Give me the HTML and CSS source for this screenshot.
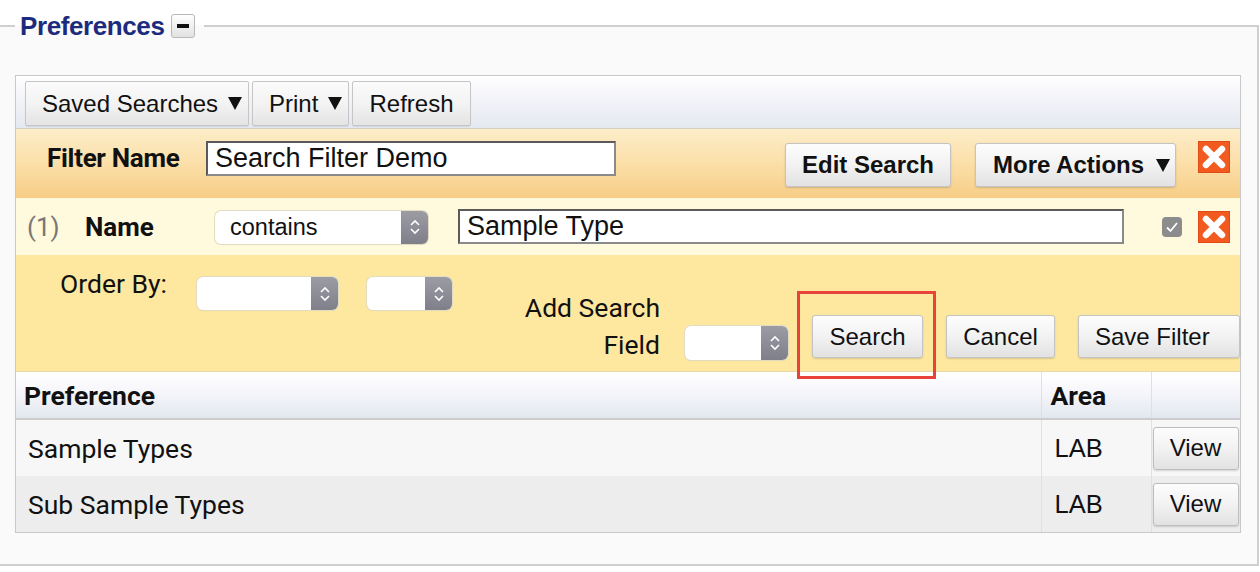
FILE: index.html
```html
<!DOCTYPE html>
<html>
<head>
<meta charset="utf-8">
<link rel="stylesheet" href="styles.css">
</head>
<body>
<fieldset class="prefs">
  <legend class="prefs-legend"><span class="legend-text">Preferences</span><span class="collapse-btn"><span class="dash"></span></span></legend>
  <div class="panel">
    <div class="toolbar">
      <button class="tbtn">Saved Searches <svg class="caret" viewBox="0 0 14 14" width="14" height="14"><path d="M0 1 H14 L7 14 Z" fill="#111"/></svg></button>
      <button class="tbtn">Print <svg class="caret" viewBox="0 0 14 14" width="14" height="14"><path d="M0 1 H14 L7 14 Z" fill="#111"/></svg></button>
      <button class="tbtn">Refresh</button>
    </div>
    <div class="filter-head">
      <span class="filter-label">Filter Name</span>
      <div class="text-input name-input">Search Filter Demo</div>
      <button class="btn bold edit-btn">Edit Search</button>
      <button class="btn bold more-btn">More Actions <svg class="caret" viewBox="0 0 14 14" width="14" height="14"><path d="M0 1 H14 L7 14 Z" fill="#111"/></svg></button>
      <svg class="xicon head-x" viewBox="0 0 32 32" width="32" height="32"><rect x="0.5" y="0.5" width="31" height="31" fill="#f35a20" stroke="#e04a14"/><path d="M8 8 L24 24 M24 8 L8 24" stroke="#fff" stroke-width="6.5" stroke-linecap="round"/></svg>
    </div>
    <div class="crit-row">
      <span class="crit-num">(1)</span>
      <span class="crit-label">Name</span>
      <div class="select sel-contains"><span class="sel-text">contains</span><span class="sel-arrows"><svg viewBox="0 0 12 20" width="12" height="20"><path d="M2 8 L6 4 L10 8 M2 12 L6 16 L10 12" fill="none" stroke="#fff" stroke-width="1.6"/></svg></span></div>
      <div class="text-input crit-input">Sample Type</div>
      <span class="checkbox"><svg viewBox="0 0 20 20" width="20" height="20"><rect x="0" y="0" width="20" height="20" rx="4" fill="#8c8c8c"/><path d="M5 10.5 L8.5 14 L15 6" fill="none" stroke="#fff" stroke-width="1.8"/></svg></span>
      <svg class="xicon crit-x" viewBox="0 0 32 32" width="32" height="34"><rect x="0.5" y="0.5" width="31" height="31" fill="#f35a20" stroke="#e04a14"/><path d="M8 8 L24 24 M24 8 L8 24" stroke="#fff" stroke-width="6.5" stroke-linecap="round"/></svg>
    </div>
    <div class="order-area">
      <span class="order-label">Order By:</span>
      <div class="select sel-order1"><span class="sel-text"></span><span class="sel-arrows"><svg viewBox="0 0 12 20" width="12" height="20"><path d="M2 8 L6 4 L10 8 M2 12 L6 16 L10 12" fill="none" stroke="#fff" stroke-width="1.6"/></svg></span></div>
      <div class="select sel-order2"><span class="sel-text"></span><span class="sel-arrows"><svg viewBox="0 0 12 20" width="12" height="20"><path d="M2 8 L6 4 L10 8 M2 12 L6 16 L10 12" fill="none" stroke="#fff" stroke-width="1.6"/></svg></span></div>
      <span class="add-label">Add Search<br>Field</span>
      <div class="select sel-add"><span class="sel-text"></span><span class="sel-arrows"><svg viewBox="0 0 12 20" width="12" height="20"><path d="M2 8 L6 4 L10 8 M2 12 L6 16 L10 12" fill="none" stroke="#fff" stroke-width="1.6"/></svg></span></div>
      <span class="highlight"><button class="btn act-btn search-btn">Search</button></span>
      <button class="btn act-btn cancel-btn">Cancel</button>
      <button class="btn act-btn save-btn">Save Filter</button>
    </div>
    <table class="results">
      <colgroup><col class="w-pref"><col class="w-area"><col class="w-act"></colgroup>
      <thead>
        <tr><th class="c-pref">Preference</th><th class="c-area">Area</th><th class="c-act"></th></tr>
      </thead>
      <tbody>
        <tr class="odd"><td class="c-pref">Sample Types</td><td class="c-area lab">LAB</td><td class="c-act"><button class="btn view-btn">View</button></td></tr>
        <tr class="even"><td class="c-pref">Sub Sample Types</td><td class="c-area lab">LAB</td><td class="c-act"><button class="btn view-btn">View</button></td></tr>
      </tbody>
    </table>
  </div>
</fieldset>
</body>
</html>
```

FILE: styles.css
```css
html, body {
  margin: 0;
  padding: 0;
  background: #ffffff;
}
body {
  font-family: "Liberation Sans", Arial, sans-serif;
  color: #111;
  overflow: hidden;
  padding-top: 11px;
}
.prefs {
  margin: 0 2px 0 -1px;
  padding: 34px 16px 31px 15px;
  border: 1px solid #cfcfcf;
  border-width: 2px 2px 2px 1px;
  background: #fafafa;
}
.prefs-legend {
  padding: 0 9px 0 5px;
  height: 30px;
  display: flex;
  align-items: center;
  margin-left: 0;
}
.legend-text {
  font-family: "Liberation Sans", Arial, sans-serif;
  font-weight: bold;
  font-size: 26px;
  letter-spacing: -0.4px;
  color: #1c2b7d;
  line-height: 30px;
}
.collapse-btn {
  width: 22px;
  height: 22px;
  margin-left: 7px;
  border: 1px solid #b9b9b9;
  border-radius: 3px;
  background: linear-gradient(#ffffff, #e2e2e2);
  display: flex;
  align-items: center;
  justify-content: center;
}
.dash {
  width: 12px;
  height: 4px;
  background: #111;
}
.panel {
  border: 1px solid #c9c9c9;
  background: #ffffff;
}
.toolbar {
  display: flex;
  gap: 3px;
  padding: 5px 9px 2px 9px;
  height: 45px;
  background: linear-gradient(#ffffff 0%, #f6f6fb 35%, #e4e8f0 100%);
  border-bottom: 1px solid #d6d0c0;
}
button {
  font-family: "Liberation Sans", Arial, sans-serif;
  color: #111;
  cursor: default;
}
.tbtn {
  height: 45px;
  padding: 0 16px;
  font-size: 24px;
  border: 1px solid #c6c6c6;
  border-radius: 2px;
  background: linear-gradient(#fbfbfb 0%, #f3f3f3 50%, #e4e4e4 100%);
  box-shadow: 0 1px 1px rgba(0,0,0,0.08);
  white-space: nowrap;
}
.tbtn:first-child { padding: 0 0 0 16px; width: 224px; text-align: left; }
.tbtn:nth-child(2) { width: 97px; padding: 0 0 0 16px; text-align: left; }
.tbtn:nth-child(3) { width: 119px; padding: 0; }
.caret {
  display: inline-block;
  vertical-align: middle;
  margin-left: 3px;
  position: relative;
  top: -2px;
}
.btn {
  font-size: 24px;
  border: 1px solid #c4c4c4;
  border-radius: 3px;
  background: linear-gradient(#fdfdfd 0%, #f2f2f2 50%, #e2e2e2 100%);
  box-shadow: 0 1px 2px rgba(0,0,0,0.15);
  padding: 0;
  white-space: nowrap;
}
.bold { font-weight: bold; font-size: 24px; }
.filter-head {
  display: flex;
  align-items: flex-start;
  height: 69px;
  padding-left: 31px;
  padding-right: 10px;
  background: linear-gradient(#fdedc9 0%, #fbdfa8 50%, #f7cd87 100%);
}
.filter-label {
  font-family: Roboto, "Liberation Sans", sans-serif;
  font-weight: bold;
  font-size: 26px;
  letter-spacing: -0.3px;
  margin-top: 14px;
  width: 159px;
}
.text-input {
  background: #fff;
  border: 2px solid #5a5a5a;
  border-right-color: #8a8a8a;
  border-bottom-color: #8a8a8a;
  font-family: "Liberation Sans", Arial, sans-serif;
  font-size: 27px;
  box-sizing: border-box;
  padding-left: 7px;
  display: flex;
  align-items: center;
  white-space: nowrap;
}
.name-input {
  width: 410px;
  height: 35px;
  margin-top: 12px;
}
.edit-btn {
  margin-left: auto;
  margin-top: 14px;
  width: 166px;
  height: 44px;
}
.more-btn {
  margin-left: 24px;
  margin-top: 14px;
  width: 201px;
  height: 44px;
  text-align: left;
  padding-left: 17px;
}
.more-btn .caret { margin-left: 5px; }
.xicon { display: block; }
.head-x {
  margin-left: 22px;
  margin-top: 12px;
}
.crit-row {
  display: flex;
  align-items: center;
  height: 57px;
  padding-left: 11px;
  padding-right: 10px;
  background: #fff9de;
}
.crit-num {
  font-family: Roboto, "Liberation Sans", sans-serif;
  font-size: 26px;
  color: #777;
  width: 58px;
}
.crit-label {
  font-family: Roboto, "Liberation Sans", sans-serif;
  font-weight: bold;
  font-size: 26px;
  width: 130px;
}
.select {
  display: flex;
  height: 33px;
  border-radius: 6px;
  background: #fff;
  box-shadow: 0 0 0 1px #e2dcc0, 0 1px 1px rgba(0,0,0,0.1);
  overflow: hidden;
  box-sizing: border-box;
}
.sel-text {
  flex: 1;
  font-family: "Liberation Sans", Arial, sans-serif;
  font-size: 23.5px;
  padding-left: 15px;
  display: flex;
  align-items: center;
}
.sel-arrows {
  width: 27px;
  background: linear-gradient(#9c9ca5, #7f7f8a);
  display: flex;
  align-items: center;
  justify-content: center;
}
.sel-contains {
  width: 213px;
  margin-top: 1px;
}
.crit-input {
  width: 666px;
  height: 35px;
  margin-left: 30px;
}
.checkbox {
  margin-left: 38px;
  display: block;
  height: 20px;
}
.checkbox svg { display: block; }
.crit-x { margin-left: 16px; margin-top: 1px; }
.order-area {
  display: flex;
  align-items: flex-start;
  height: 116px;
  padding-left: 44px;
  background: #fee89f;
  border-bottom: 1px solid #e5d7a9;
}
.order-label {
  font-family: Roboto, "Liberation Sans", sans-serif;
  font-size: 26.5px;
  margin-top: 13px;
  width: 137px;
}
.sel-order1 {
  width: 141px;
  margin-top: 22px;
}
.sel-order2 {
  width: 85px;
  margin-left: 29px;
  margin-top: 22px;
}
.add-label {
  font-family: Roboto, "Liberation Sans", sans-serif;
  font-size: 26.5px;
  line-height: 37px;
  text-align: right;
  width: 208px;
  margin-top: 34px;
}
.sel-add {
  width: 103px;
  margin-left: 25px;
  margin-top: 71px;
  height: 34px;
}
.highlight {
  position: relative;
  margin-left: 24px;
  margin-top: 60px;
  display: block;
}
.highlight::after {
  content: "";
  position: absolute;
  left: -15px;
  right: -13px;
  top: -24px;
  bottom: -21px;
  border: 3px solid #e8433b;
  pointer-events: none;
  z-index: 2;
}
.act-btn {
  height: 43px;
  font-size: 24px;
}
.search-btn { width: 111px; display: block; }
.cancel-btn { width: 109px; margin-left: 23px; margin-top: 60px; }
.save-btn { width: 162px; margin-left: 23px; margin-top: 60px; text-align: left; padding-left: 16px; }
.results {
  width: 100%;
  border-collapse: collapse;
  table-layout: fixed;
}
.w-pref { width: 1025px; }
.w-area { width: 110px; }
.w-act { width: 89px; }
.results th {
  height: 46px;
  text-align: left;
  font-family: Roboto, "Liberation Sans", sans-serif;
  font-weight: bold;
  font-size: 26.5px;
  background: linear-gradient(#ffffff 0%, #f7f7fb 40%, #e2e7ef 100%);
  border-bottom: 2px solid #cccccc;
  padding: 0;
}
.results th.c-pref { padding-left: 8px; }
.results th.c-area { padding-left: 9px; }
.results td {
  height: 56px;
  padding: 0;
  font-family: Roboto, "Liberation Sans", sans-serif;
  font-size: 26.5px;
}
.results td.c-pref { padding-left: 12px; }
.results .c-area {
  border-left: 1px solid #e0e0e0;
  border-right: 1px solid #e0e0e0;
}
.results td.lab {
  font-family: "Liberation Sans", Arial, sans-serif;
  font-size: 25.5px;
  padding-left: 13px;
}
.results tr.odd td { background: #f7f7f7; }
.results tr.even td { background: #ededed; }
.view-btn {
  width: 86px;
  height: 43px;
  margin-left: 1px;
  display: block;
  font-size: 24px;
  border-color: #bdbdbd;
}
```
